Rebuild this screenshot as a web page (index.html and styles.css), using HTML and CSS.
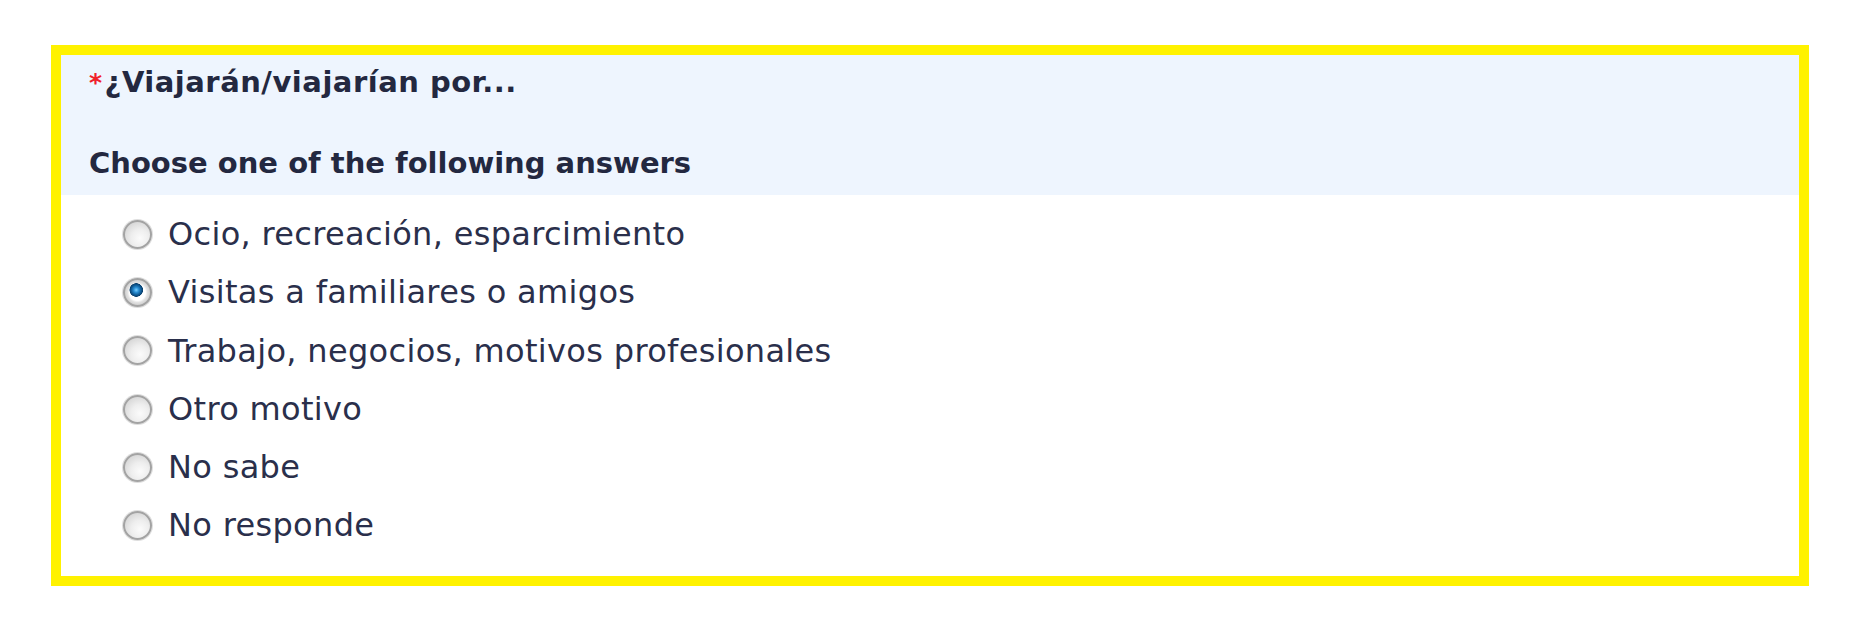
FILE: index.html
```html
<!DOCTYPE html>
<html lang="es">
<head>
<meta charset="utf-8">
<title>Pregunta</title>
<link rel="stylesheet" href="styles.css">
</head>
<body>
<div class="question">
  <div class="q-head">
    <div class="q-title"><span class="req">*</span>¿Viajarán/viajarían por...</div>
    <div class="q-help">Choose one of the following answers</div>
  </div>
  <ul class="answers">
    <li class="answer"><input type="radio" name="q" class="radio"><span class="label">Ocio, recreación, esparcimiento</span></li>
    <li class="answer"><input type="radio" name="q" class="radio" checked><span class="label">Visitas a familiares o amigos</span></li>
    <li class="answer"><input type="radio" name="q" class="radio"><span class="label">Trabajo, negocios, motivos profesionales</span></li>
    <li class="answer"><input type="radio" name="q" class="radio"><span class="label">Otro motivo</span></li>
    <li class="answer"><input type="radio" name="q" class="radio"><span class="label">No sabe</span></li>
    <li class="answer"><input type="radio" name="q" class="radio"><span class="label">No responde</span></li>
  </ul>
</div>
</body>
</html>
```
FILE: styles.css
```css
html, body {
  margin: 0;
  padding: 0;
  background: #ffffff;
}
body {
  padding: 45px 0 0 51px;
  font-family: "DejaVu Sans", Verdana, sans-serif;
  color: #272c47;
}
.question {
  box-sizing: border-box;
  width: 1758px;
  height: 541px;
  border: 10px solid #fff200;
  background: #ffffff;
}
.q-head {
  background: #eef5fe;
  padding: 9px 28px 14px 28px;
  font-weight: bold;
  font-size: 29px;
  line-height: 36px;
  color: #232840;
}
.q-title {
  white-space: nowrap;
  letter-spacing: 0.5px;
}
.req {
  color: #f0202a;
  font-size: 25px;
  font-weight: bold;
  margin-right: 2px;
  position: relative;
  top: -1px;
}
.q-help {
  margin-top: 43px;
}
.answers {
  list-style: none;
  margin: 0;
  padding: 10px 0 0 62px;
}
.answer {
  display: flex;
  align-items: center;
  height: 58.3px;
  font-size: 32px;
  line-height: 58.3px;
  color: #2a2f4b;
  letter-spacing: 0.33px;
}
.radio {
  -webkit-appearance: none;
  appearance: none;
  box-sizing: border-box;
  width: 29px;
  height: 29px;
  margin: 0 16px 0 0;
  border-radius: 50%;
  border: 2px solid #a3a3a3;
  box-shadow: 0 0 0 1px #dedede;
  background: radial-gradient(circle at 60% 65%, #fbfbfb 0, #eeeeee 40%, #d6d6d6 80%, #cfcfcf 100%);
  flex: none;
}
.radio:checked {
  background:
    radial-gradient(circle at 45% 40%, #7cd0ff 0, #2a8fd4 2.5px, #0f5a94 5px, #0a3f6c 6.5px, rgba(10,63,108,0) 7px),
    radial-gradient(circle at 50% 50%, #ffffff 0, #ffffff 8px, #e2e2e2 10px, #cdcdcd 13px);
}
.label {
  white-space: nowrap;
}
```
